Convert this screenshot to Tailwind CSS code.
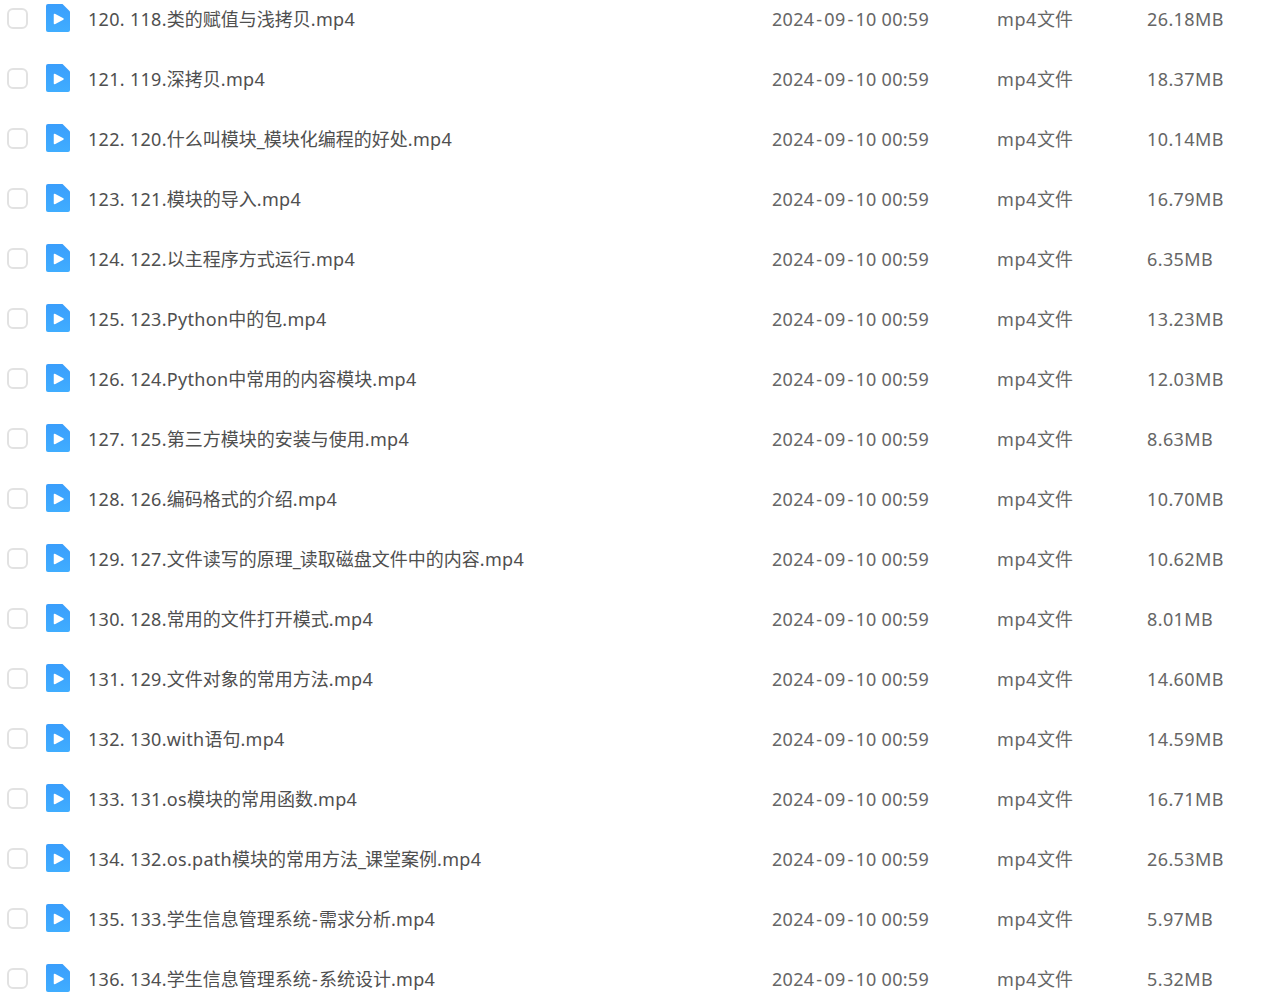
<!DOCTYPE html>
<html lang="zh-CN">
<head>
    <meta charset="UTF-8">
    <title>文件列表</title>
    <script src="https://cdn.jsdelivr.net/npm/@tailwindcss/browser@4"></script>
</head>
<body class="bg-white overflow-hidden h-[1003px] font-['Noto_Sans','Noto_Sans_CJK_SC',sans-serif]">
    <ul id="fileList" class="-mt-[11px]"></ul>

    <template id="rowTemplate">
        <li class="flex items-center h-[60px] text-[18px] text-[#666]">
            <span class="ml-[7px] mb-[2px] w-[21px] h-[21px] shrink-0 rounded-[6px] border-2 border-[#e2e2e2] bg-white"></span>
            <svg class="ml-[18px] mb-[2px] w-[24px] h-[28px] shrink-0" viewBox="0 0 24 28">
                <defs>
                    <linearGradient id="fileBlue" x1="0" y1="0" x2="0" y2="1">
                        <stop offset="0" stop-color="#3a9efc"/>
                        <stop offset="1" stop-color="#40adff"/>
                    </linearGradient>
                </defs>
                <path d="M2 0H16.500L23.500 7Q24 7.500 24 8.200V26a2 2 0 0 1-2 2H2a2 2 0 0 1-2-2V2a2 2 0 0 1 2-2z" fill="url(#fileBlue)"/>
                <path d="M8.500 10.500L17 15L8.500 19.500z" fill="#fff" stroke="#fff" stroke-width="1.500" stroke-linejoin="round"/>
            </svg>
            <span data-name class="ml-[18px] w-[684px] shrink-0 text-[#4f4f4f] whitespace-nowrap"></span>
            <span class="w-[225px] shrink-0 whitespace-nowrap tracking-[0.3px]">2024<span class="mx-[1.9px]">-</span>09<span class="mx-[1.9px]">-</span>10 00:59</span>
            <span class="w-[150px] shrink-0"><span class="tracking-[0.6px]">mp4</span>文件</span>
            <span data-size class="whitespace-nowrap tracking-[0.4px]"></span>
        </li>
    </template>

    <script>
        const files = [
            ['120. 118.类的赋值与浅拷贝.mp4', '26.18MB'],
            ['121. 119.深拷贝.mp4', '18.37MB'],
            ['122. 120.什么叫模块_模块化编程的好处.mp4', '10.14MB'],
            ['123. 121.模块的导入.mp4', '16.79MB'],
            ['124. 122.以主程序方式运行.mp4', '6.35MB'],
            ['125. 123.Python中的包.mp4', '13.23MB'],
            ['126. 124.Python中常用的内容模块.mp4', '12.03MB'],
            ['127. 125.第三方模块的安装与使用.mp4', '8.63MB'],
            ['128. 126.编码格式的介绍.mp4', '10.70MB'],
            ['129. 127.文件读写的原理_读取磁盘文件中的内容.mp4', '10.62MB'],
            ['130. 128.常用的文件打开模式.mp4', '8.01MB'],
            ['131. 129.文件对象的常用方法.mp4', '14.60MB'],
            ['132. 130.with语句.mp4', '14.59MB'],
            ['133. 131.os模块的常用函数.mp4', '16.71MB'],
            ['134. 132.os.path模块的常用方法_课堂案例.mp4', '26.53MB'],
            ['135. 133.学生信息管理系统-需求分析.mp4', '5.97MB'],
            ['136. 134.学生信息管理系统-系统设计.mp4', '5.32MB'],
        ];

        const list = document.getElementById('fileList');
        const rowTemplate = document.getElementById('rowTemplate');

        // latin runs are a bit narrower than in the original font, so they get some tracking
        function fillName(el, name) {
            name.split(/([\x00-\x7f]+)/).forEach(run => {
                const part = document.createElement('span');
                part.textContent = run;
                if (run === '-') part.className = 'mx-[1.2px]';
                else if (run === '_') part.className = 'tracking-[-1px]';
                else if (/^[\x00-\x7f]+$/.test(run)) part.className = 'tracking-[0.3px]';
                el.appendChild(part);
            });
        }

        files.forEach(([name, size]) => {
            const row = rowTemplate.content.cloneNode(true);
            fillName(row.querySelector('[data-name]'), name);
            row.querySelector('[data-size]').textContent = size;
            list.appendChild(row);
        });
    </script>
</body>
</html>
